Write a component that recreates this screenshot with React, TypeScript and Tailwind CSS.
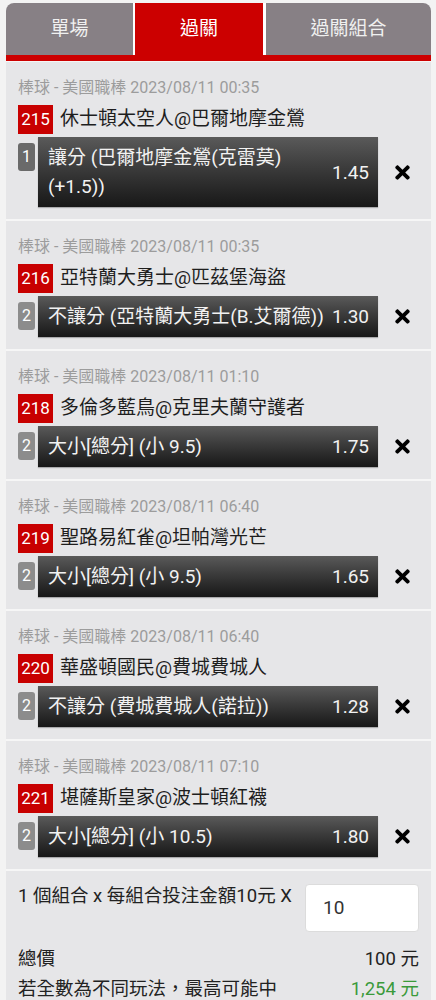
import { FaTimes } from 'react-icons/fa'

interface Leg {
  time: string
  no: string
  teams: string
  seq: string
  pick: string
  odds: string
}

const legs: Leg[] = [
  { time: '2023/08/11 00:35', no: '215', teams: '休士頓太空人@巴爾地摩金鶯', seq: '1', pick: '讓分 (巴爾地摩金鶯(克雷莫) (+1.5))', odds: '1.45' },
  { time: '2023/08/11 00:35', no: '216', teams: '亞特蘭大勇士@匹茲堡海盜', seq: '2', pick: '不讓分 (亞特蘭大勇士(B.艾爾德))', odds: '1.30' },
  { time: '2023/08/11 01:10', no: '218', teams: '多倫多藍鳥@克里夫蘭守護者', seq: '2', pick: '大小[總分] (小 9.5)', odds: '1.75' },
  { time: '2023/08/11 06:40', no: '219', teams: '聖路易紅雀@坦帕灣光芒', seq: '2', pick: '大小[總分] (小 9.5)', odds: '1.65' },
  { time: '2023/08/11 06:40', no: '220', teams: '華盛頓國民@費城費城人', seq: '2', pick: '不讓分 (費城費城人(諾拉))', odds: '1.28' },
  { time: '2023/08/11 07:10', no: '221', teams: '堪薩斯皇家@波士頓紅襪', seq: '2', pick: '大小[總分] (小 10.5)', odds: '1.80' },
]

function LegCard({ leg, first }: { leg: Leg; first: boolean }) {
  return (
    <div className="bg-[#e6e6e8] px-[12px] pt-[15px] pb-[12px] border-b-2 border-[#f6f6f6]">
      <div className="text-[16px] leading-[22px] text-[#9c9c9c]">棒球 - 美國職棒 {leg.time}</div>
      <div className="mt-[6px] flex items-center h-[29px]">
        <span className="bg-[#c80000] text-white text-[17px] h-[29px] w-[35px] flex items-center justify-center">{leg.no}</span>
        <span className="ml-[7px] text-[19px] text-[#1e1e1e]">{leg.teams}</span>
      </div>
      <div className="mt-[3px] flex items-start">
        <span
          className={
            (first ? 'bg-[#6a6a6a] ' : 'bg-[#8c8c8c] ') +
            'mt-[6px] w-[17px] h-[28px] rounded-[3px] text-white text-[16px] flex items-center justify-center'
          }
        >
          {leg.seq}
        </span>
        <div className="ml-[3px] w-[340px] flex items-center gap-[3px] pl-[10px] pr-[9px] py-[6px] bg-gradient-to-b from-[#5a5a5a] to-[#181818] shadow-[0_1px_1px_rgba(0,0,0,0.25)]">
          <span className="flex-1 text-[19px] leading-[29px] text-[#f2f2f2]">{leg.pick}</span>
          <span className="text-[19px] leading-[29px] text-[#f2f2f2]">{leg.odds}</span>
        </div>
        <div className="ml-[14px] self-center text-black">
          <FaTimes className="w-[21px] h-[21px]" />
        </div>
      </div>
    </div>
  )
}

export default function App() {
  return (
    <div className="min-h-screen bg-[#f3f3f3] pt-[3px] px-[6px] pr-[5px] font-['Roboto','Noto_Sans_CJK_TC',sans-serif]">
      <div className="flex rounded-t-[8px] overflow-hidden h-[52px] gap-[2px] bg-white">
        <div className="w-[127px] bg-[#878085] text-[#f0f0f0] text-[19px] flex items-center justify-center">單場</div>
        <div className="w-[128px] bg-[#cc0000] text-white text-[19px] flex items-center justify-center">過關</div>
        <div className="flex-1 ml-[1px] bg-[#878085] text-[#f0f0f0] text-[19px] flex items-center justify-center">過關組合</div>
      </div>
      <div className="h-[6px] bg-[#cc0000]" />
      <div className="border-t border-[#f6f6f6]">
        {legs.map((leg, i) => (
          <LegCard key={leg.no} leg={leg} first={i === 0} />
        ))}
      </div>
      <div className="bg-[#e6e6e8] px-[12px] pt-[13px] pb-[20px]">
        <div className="flex items-start justify-between">
          <span className="text-[18.5px] leading-[24px] text-[#222]">1 個組合 x 每組合投注金額10元 X</span>
          <div className="w-[114px] h-[48px] bg-white rounded-[4px] border border-[#dcdcdc] flex items-center pl-[17px] text-[19px] text-[#333]">10</div>
        </div>
        <div className="mt-[12px] flex justify-between text-[18.5px] leading-[30px] text-[#222]">
          <span>總價</span>
          <span>100 元</span>
        </div>
        <div className="flex justify-between text-[18.5px] leading-[30px] text-[#222]">
          <span>若全數為不同玩法，最高可能中</span>
          <span className="text-[#3a9a3a]">1,254 元</span>
        </div>
      </div>
    </div>
  )
}
